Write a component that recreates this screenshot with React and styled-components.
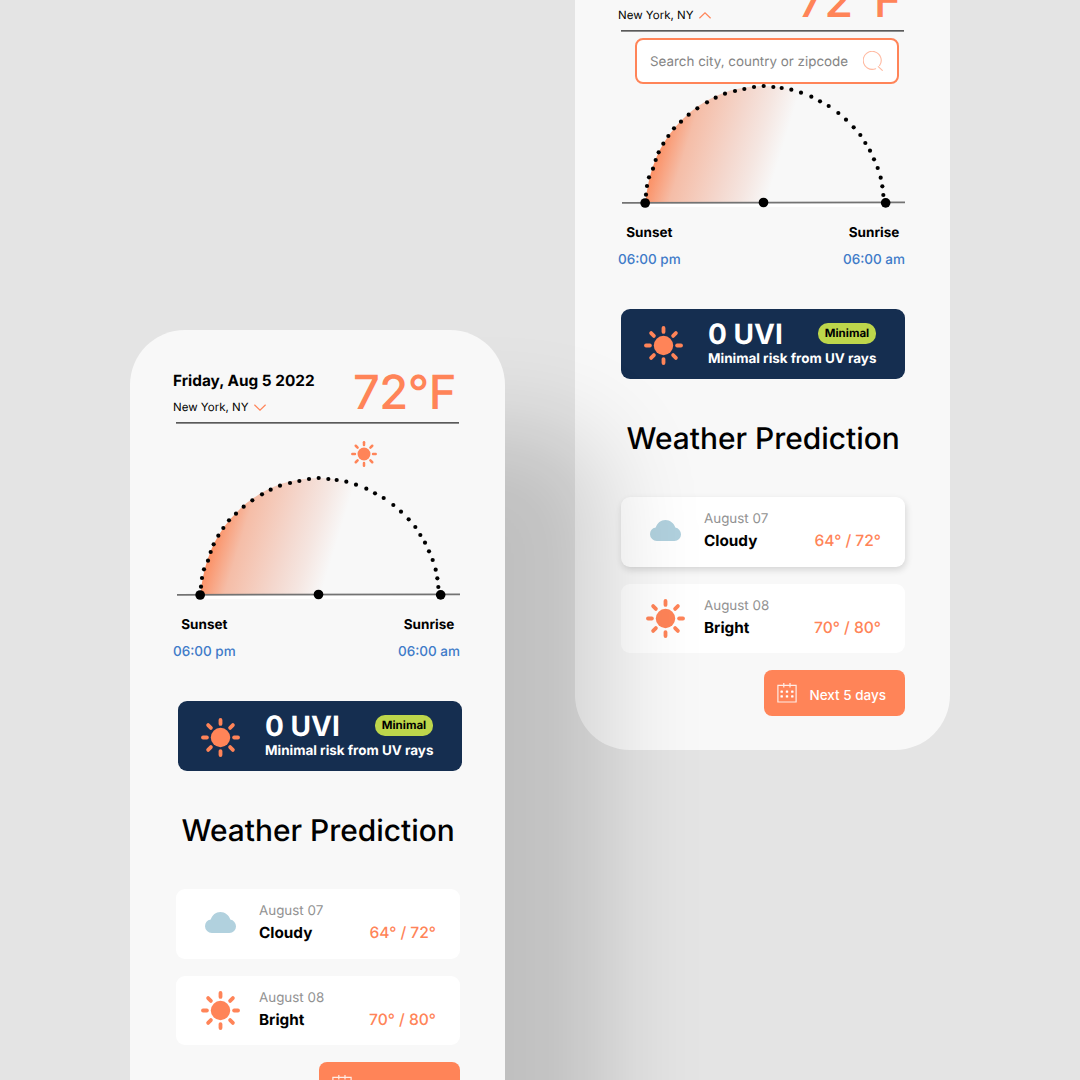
import React from "react";
import styled, { createGlobalStyle } from "styled-components";

const coral = "#ff8458";

const GlobalStyle = createGlobalStyle`
  * { box-sizing: border-box; }
  body {
    margin: 0;
    background: #e4e4e4;
    font-family: Inter, "Liberation Sans", sans-serif;
    color: #000;
    text-rendering: geometricPrecision;
  }
`;

const Canvas = styled.main`
  display: flex;
  align-items: flex-start;
  gap: 70px;
  width: 1080px;
  height: 1080px;
  padding-left: 130px;
  overflow: hidden;
  background: #e4e4e4;
`;

const Phone = styled.section`
  position: relative;
  z-index: ${(p) => (p.$raised ? 1 : 0)};
  flex: none;
  width: 375px;
  height: 812px;
  margin-top: ${(p) => p.$top}px;
  padding: 38px 45px 0 43px;
  border-radius: 55px;
  background: #f8f8f8;
  box-shadow: ${(p) => (p.$raised ? "100px 100px 100px rgba(0, 0, 0, 0.16)" : "none")};
`;

const Header = styled.header`
  display: flex;
  justify-content: space-between;
  height: 54px;
`;

const Place = styled.div`
  display: flex;
  flex-direction: column;
  gap: 8px;
  padding-top: 3px;
`;

const DateText = styled.div`
  font-size: 15.35px;
  font-weight: 700;
  line-height: 20px;
  white-space: nowrap;
`;

const City = styled.div`
  display: flex;
  align-items: center;
  gap: 6px;
  font-size: 11.5px;
  line-height: 16px;
`;

const Temperature = styled.div`
  margin-right: 4px;
  color: ${coral};
  font-size: 47px;
  font-weight: 500;
  line-height: 49px;
  letter-spacing: -0.5px;
`;

const Rule = styled.div`
  width: 283px;
  height: 2px;
  margin-left: 3px;
  background: linear-gradient(#5a5a5a 50%, #8c8c8c 50%);
`;

const SkyIcon = styled.div`
  height: 49px;
  padding: 17.3px 0 0 178.3px;
  line-height: 0;
`;

const Dome = styled.svg`
  display: block;
  margin-left: 4px;
`;

const Times = styled.div`
  display: flex;
  justify-content: space-between;
  height: 98.4px;
  padding-top: 12px;
`;

const TimeBlock = styled.div`
  display: flex;
  flex-direction: column;
  align-items: center;
  gap: 6px;
  line-height: 21px;
`;

const TimeLabel = styled.div`
  font-size: 13.5px;
  font-weight: 700;
`;

const TimeValue = styled.div`
  color: #3f7bc8;
  font-size: 13.5px;
  font-weight: 500;
`;

const UvCard = styled.div`
  display: flex;
  gap: 25.5px;
  width: 284px;
  height: 69.3px;
  margin-left: ${(p) => p.$inset}px;
  padding: 10px 29px 0 22.5px;
  border-radius: 9px;
  background: #152e50;
  color: #fff;
`;

const UvIcon = styled.div`
  padding-top: 6.6px;
  line-height: 0;
`;

const UvBody = styled.div`
  flex: 1;
`;

const UvTop = styled.div`
  display: flex;
  justify-content: space-between;
  height: 30.5px;
`;

const UvValue = styled.div`
  font-size: 28px;
  font-weight: 700;
  line-height: 30px;
`;

const Badge = styled.div`
  width: 58px;
  height: 21px;
  margin-top: 3.5px;
  border-radius: 10px;
  background: #bdd64b;
  color: #000;
  font-size: 11.5px;
  font-weight: 700;
  line-height: 21px;
  text-align: center;
  text-indent: -1px;
`;

const UvNote = styled.div`
  font-size: 13.45px;
  font-weight: 700;
  line-height: 19px;
  white-space: nowrap;
`;

const Title = styled.h2`
  height: 118.4px;
  margin: 0;
  padding: 40.6px 0 0 8.5px;
  font-size: 29.9px;
  font-weight: 500;
  line-height: 40px;
  white-space: nowrap;
`;

const Forecast = styled.div`
  display: flex;
  flex-direction: column;
  gap: 17px;
  width: 284px;
  margin-left: 3px;
`;

const DayCard = styled.article`
  display: flex;
  height: 69.5px;
  padding: 11px 24px 0 25px;
  border-radius: 9px;
  background: #fff;
  box-shadow: ${(p) => (p.$lifted ? "1px 3px 7px rgba(0, 0, 0, 0.14)" : "none")};
`;

const DayIcon = styled.div`
  width: 58px;
  padding-top: ${(p) => p.$drop}px;
  line-height: 0;
`;

const DayText = styled.div`
  flex: 1;
  line-height: 22px;
`;

const DayDate = styled.div`
  color: #929292;
  font-size: 13.4px;
`;

const DayName = styled.div`
  font-size: 15.3px;
  font-weight: 700;
`;

const DayTemps = styled.div`
  padding-top: 22px;
  color: ${coral};
  font-size: 15.6px;
  font-weight: 500;
  line-height: 22px;
`;

const NextButton = styled.button`
  display: flex;
  align-items: center;
  align-self: flex-end;
  gap: 13px;
  width: 141.5px;
  height: 46px;
  padding: 0 0 0 13px;
  border: 0;
  border-radius: 8px;
  background: ${coral};
  color: #fff;
  font: 500 13.5px/20px Inter, "Liberation Sans", sans-serif;

  span { padding-top: 4px; }
`;

const SearchBox = styled.div`
  position: absolute;
  top: 100px;
  left: 59.5px;
  display: flex;
  align-items: center;
  justify-content: space-between;
  width: 264.5px;
  height: 46px;
  padding: 0 14.5px 0 13.5px;
  border: 2px solid ${coral};
  border-radius: 8px;
  background: #fff;
  color: #858585;
  font-size: 13.4px;

  span { padding-top: 1.5px; }
`;

function Sun({ size }) {
  return (
    <svg width={size} height={size} viewBox="-19.5 -19.5 39 39">
      <circle r="9.7" fill={coral} />
      {[0, 45, 90, 135, 180, 225, 270, 315].map((a) => (
        <path key={a} d="M13.6 0H17.5" transform={`rotate(${a})`} stroke={coral} strokeWidth="3.8" strokeLinecap="round" />
      ))}
    </svg>
  );
}

function Cloud() {
  return (
    <svg width="39" height="21" viewBox="0 0 39 21">
      <path
        fill="#b1d1de"
        d="M11 21A6.9 6.9 0 0 1 4 14.2A7 7 0 0 1 9.7 7.5C11.2 3 14.8 0 19.4 0S28 3.2 29.3 7.6A6.8 6.8 0 0 1 35 14.3A6.6 6.6 0 0 1 28.4 21Z"
      />
    </svg>
  );
}

function Chevron({ up }) {
  return (
    <svg width="12" height="7" viewBox="0 0 12 7" fill="none" stroke={coral} strokeWidth="1.2">
      <path d={up ? "M.4 6.2 6 .9 11.6 6.2" : "M.4.8 6 6.1 11.6.8"} />
    </svg>
  );
}

function Calendar() {
  return (
    <svg width="20" height="20" viewBox="0 0 20 20" fill="none" stroke="#fff" strokeOpacity=".85">
      <path d="M.9 2.4H19.1V19H.9ZM6.8 0V4.4M13 0V4.4" strokeWidth="1.2" />
      {[4.7, 10, 15.3].map((x) =>
        [8.6, 13.4].map((y) => <rect key={`${x}-${y}`} x={x - 1.2} y={y - 1.2} width="2.4" height="2.4" rx=".6" fill="#fff" stroke="none" />)
      )}
    </svg>
  );
}

function Magnifier() {
  return (
    <svg width="20" height="20" viewBox="0 0 20 20" fill="none" stroke="#ffb9a0" strokeWidth="1.1" strokeLinecap="round">
      <path d="M12.6 17.7A9 9 0 1 1 16.6 14.5M15.3 15.6 19.3 19.4" />
    </svg>
  );
}

const domeDots = [
  [123, 365], [126, 339], [132, 313], [144, 287], [152, 261], [161, 238], [175, 212], [190, 189],
  [207, 166], [228, 146], [251, 125], [277, 106], [306, 88], [332, 74], [360, 62], [390, 54],
  [418, 48], [447, 42], [476, 39], [505, 42], [530, 45], [559, 50], [588, 59], [619, 71],
  [645, 85], [671, 99], [700, 120], [723, 140], [746, 163], [766, 186], [781, 210], [795, 233],
  [807, 259], [818, 285], [827, 314], [832, 340], [835, 366],
];

function SunDome({ id }) {
  return (
    <Dome width="283" height="130" viewBox="51 24 849 390">
      <defs>
        <linearGradient id={id} gradientUnits="userSpaceOnUse" x1="119" y1="330" x2="468" y2="437">
          <stop offset="0" stopColor="#ff8355" />
          <stop offset=".04" stopColor="#fb9369" />
          <stop offset=".24" stopColor="#f5bda7" />
          <stop offset=".6" stopColor="#f4d7cd" />
          <stop offset=".8" stopColor="#f5e6e1" />
          <stop offset="1" stopColor="#f8f8f8" />
        </linearGradient>
      </defs>
      <path d="M130 391H835V402H130Z" fill="#fff" />
      <path d="M121 388C130 310 150 245 190 189C240 120 330 39 476 39C520 39 555 48 588 59V388Z" fill={`url(#${id})`} />
      <path d="M51 389.5 900 388" stroke="#737373" strokeWidth="5" />
      {domeDots.map(([x, y]) => (
        <circle key={x} cx={x} cy={y} r="6.3" />
      ))}
      <circle cx="120.5" cy="390" r="14.5" />
      <circle cx="475.5" cy="388.5" r="14.5" />
      <circle cx="842" cy="389.5" r="14.5" />
    </Dome>
  );
}

function WeatherScreen({ id, top, raised, searching }) {
  return (
    <Phone $top={top} $raised={raised}>
      <Header>
        <Place>
          <DateText>Friday, Aug 5 2022</DateText>
          <City>New York, NY <Chevron up={searching} /></City>
        </Place>
        <Temperature>72°F</Temperature>
      </Header>
      <Rule />
      <SkyIcon><Sun size={26} /></SkyIcon>
      <SunDome id={id} />
      <Times>
        <TimeBlock>
          <TimeLabel>Sunset</TimeLabel>
          <TimeValue>06:00 pm</TimeValue>
        </TimeBlock>
        <TimeBlock>
          <TimeLabel>Sunrise</TimeLabel>
          <TimeValue>06:00 am</TimeValue>
        </TimeBlock>
      </Times>
      <UvCard $inset={searching ? 3 : 5}>
        <UvIcon><Sun size={39} /></UvIcon>
        <UvBody>
          <UvTop>
            <UvValue>0 UVI</UvValue>
            <Badge>Minimal</Badge>
          </UvTop>
          <UvNote>Minimal risk from UV rays</UvNote>
        </UvBody>
      </UvCard>
      <Title>Weather Prediction</Title>
      <Forecast>
        <DayCard $lifted={searching}>
          <DayIcon $drop={12}><Cloud /></DayIcon>
          <DayText>
            <DayDate>August 07</DayDate>
            <DayName>Cloudy</DayName>
          </DayText>
          <DayTemps>64° / 72°</DayTemps>
        </DayCard>
        <DayCard>
          <DayIcon $drop={4}><Sun size={39} /></DayIcon>
          <DayText>
            <DayDate>August 08</DayDate>
            <DayName>Bright</DayName>
          </DayText>
          <DayTemps>70° / 80°</DayTemps>
        </DayCard>
        <NextButton><Calendar /><span>Next 5 days</span></NextButton>
      </Forecast>
      {searching && (
        <SearchBox>
          <span>Search city, country or zipcode</span>
          <Magnifier />
        </SearchBox>
      )}
    </Phone>
  );
}

export default function App() {
  return (
    <>
      <GlobalStyle />
      <Canvas>
        <WeatherScreen id="dusk-left" top={330} raised />
        <WeatherScreen id="dusk-right" top={-62} searching />
      </Canvas>
    </>
  );
}
